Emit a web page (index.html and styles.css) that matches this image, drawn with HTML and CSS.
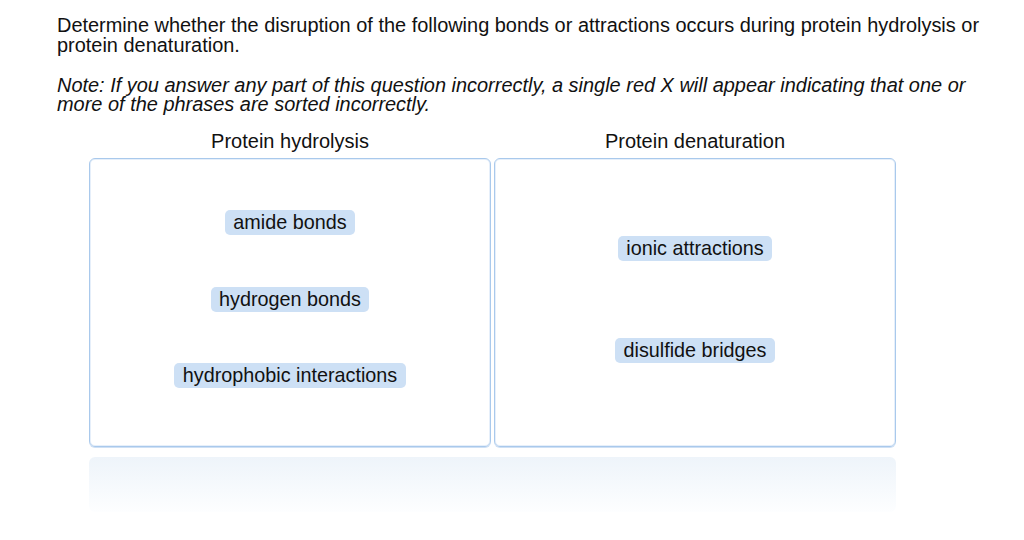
FILE: index.html
```html
<!DOCTYPE html>
<html lang="en">

<head>
    <meta charset="UTF-8">
    <meta name="viewport" content="width=device-width, initial-scale=1.0">
    <title>Sort the Bonds</title>
    <link rel="stylesheet" href="styles.css">
</head>

<body>
    <div id="question">
        <p class="prompt">Determine whether the disruption of the following bonds or attractions occurs during protein hydrolysis or protein denaturation.</p>
        <p class="note">Note: If you answer any part of this question incorrectly, a single red X will appear indicating that one or more of the phrases are sorted incorrectly.</p>
    </div>

    <div id="sorter">
        <div class="bin">
            <div class="bin-title">Protein hydrolysis</div>
            <div class="bin-box">
                <span class="chip">amide bonds</span>
                <span class="chip">hydrogen bonds</span>
                <span class="chip">hydrophobic interactions</span>
            </div>
        </div>
        <div class="bin">
            <div class="bin-title">Protein denaturation</div>
            <div class="bin-box">
                <span class="chip">ionic attractions</span>
                <span class="chip">disulfide bridges</span>
            </div>
        </div>
    </div>

    <div id="tray"></div>
</body>

</html>
```

FILE: styles.css
```css
body {
    margin: 0;
    font-family: "Liberation Sans", Arial, sans-serif;
    color: #111;
    background: #fff;
}

#question {
    padding: 16px 0 0 57px;
    width: 935px;
}

#question p {
    margin: 0;
    font-size: 19.95px;
    line-height: 19.5px;
}

#question .note {
    margin-top: 20.5px;
    font-style: italic;
}

#sorter {
    display: flex;
    gap: 3px;
    margin: 16px 0 0 89px;
    width: 807px;
}

.bin {
    flex: 1;
    display: flex;
    flex-direction: column;
}

.bin-title {
    text-align: center;
    font-size: 20px;
    line-height: 20px;
    height: 27px;
}

.bin-box {
    height: 289px;
    box-sizing: border-box;
    padding-bottom: 6px;
    border: 1px solid #a9c9ec;
    border-radius: 6px;
    box-shadow: inset 0 0 0 1px #e6effa, 0 1px 0 #cfe0f4;
    display: flex;
    flex-direction: column;
    align-items: center;
    justify-content: space-evenly;
}

.chip {
    background: #cde0f5;
    border-radius: 5px;
    padding: 0 8.5px;
    font-size: 19.8px;
    line-height: 25px;
    height: 25px;
}

#tray {
    margin: 10px 0 0 89px;
    width: 807px;
    height: 55px;
    border-radius: 6px;
    background: linear-gradient(#eef4fa, #fdfeff);
}
```
